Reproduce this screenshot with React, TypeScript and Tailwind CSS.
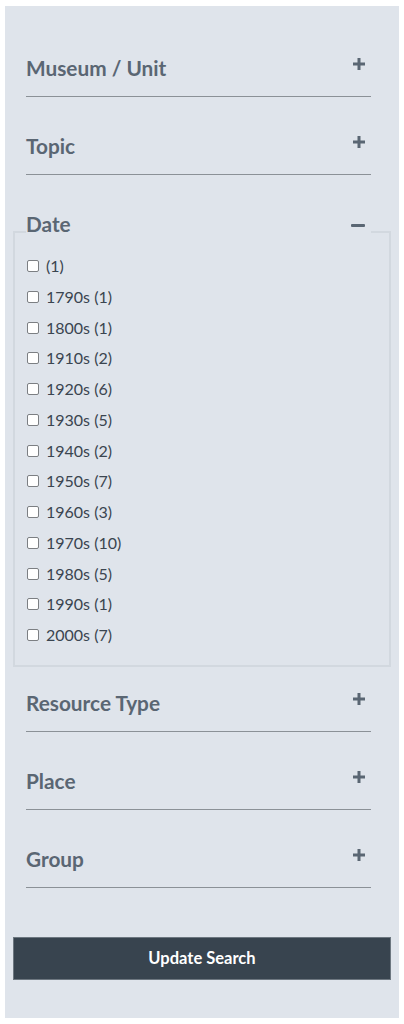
import React from 'react';

const dates = [
  '(1)',
  '1790s (1)',
  '1800s (1)',
  '1910s (2)',
  '1920s (6)',
  '1930s (5)',
  '1940s (2)',
  '1950s (7)',
  '1960s (3)',
  '1970s (10)',
  '1980s (5)',
  '1990s (1)',
  '2000s (7)',
];

function Plus() {
  return (
    <svg width="12" height="12" viewBox="0 0 12 12" className="mt-[3.5px] mr-[6px] shrink-0">
      <path d="M6 0V12M0 6H12" stroke="#5a6673" strokeWidth="3" />
    </svg>
  );
}

function Minus() {
  return (
    <svg width="14" height="3" viewBox="0 0 14 3" className="mt-[14px] mr-[6px] shrink-0">
      <rect x="0" y="0" width="14" height="3" rx="1" fill="#5a6673" />
    </svg>
  );
}

function Collapsed({ title, top = 'pt-[35px]' }: { title: string; top?: string }) {
  return (
    <div className={`ml-[21px] w-[345px] ${top} pb-[14px] border-b border-[#8b9197]`}>
      <div className="flex items-start justify-between">
        <h3 className="text-[20.8px] leading-[28px] font-bold text-[#5a6673]">{title}</h3>
        <Plus />
      </div>
    </div>
  );
}

export default function App() {
  return (
    <div className="bg-white min-h-screen pt-[6px] px-[5px]" style={{ fontFamily: 'Lato, "Open Sans", sans-serif' }}>
      <div className="w-[394px] bg-[#dfe4eb] pt-[13px] pb-[38px]">
        <Collapsed title="Museum / Unit" />
        <Collapsed title="Topic" />

        {/* Date (open) */}
        <fieldset className="mx-[8px] mt-[35px] border-2 border-[#d2d8df] pl-[11px] pr-[11px] pt-[1px] pb-[19px]">
          <legend className="w-[345px] p-0 pb-4">
            <div className="flex items-start justify-between">
              <h3 className="text-[20.8px] leading-[28px] font-bold text-[#5a6673]">Date</h3>
              <Minus />
            </div>
          </legend>
          <div className="flex flex-col gap-[8.75px]">
            {dates.map((d) => (
              <label key={d} className="flex items-center leading-[22px] text-[16px] text-[#3a4550]">
                <span className="ml-[1px] w-[12px] h-[12px] rounded-[2px] border border-[#7c7f83] bg-white shrink-0" />
                <span className="ml-[7px]">{d}</span>
              </label>
            ))}
          </div>
        </fieldset>

        <Collapsed title="Resource Type" top="pt-[22px]" />
        <Collapsed title="Place" />
        <Collapsed title="Group" />

        <button className="mx-[8px] mt-[49px] w-[378px] h-[43px] bg-[#38444f] border border-[#6d7780] text-white font-bold text-[16.5px]">
          Update Search
        </button>
      </div>
    </div>
  );
}
